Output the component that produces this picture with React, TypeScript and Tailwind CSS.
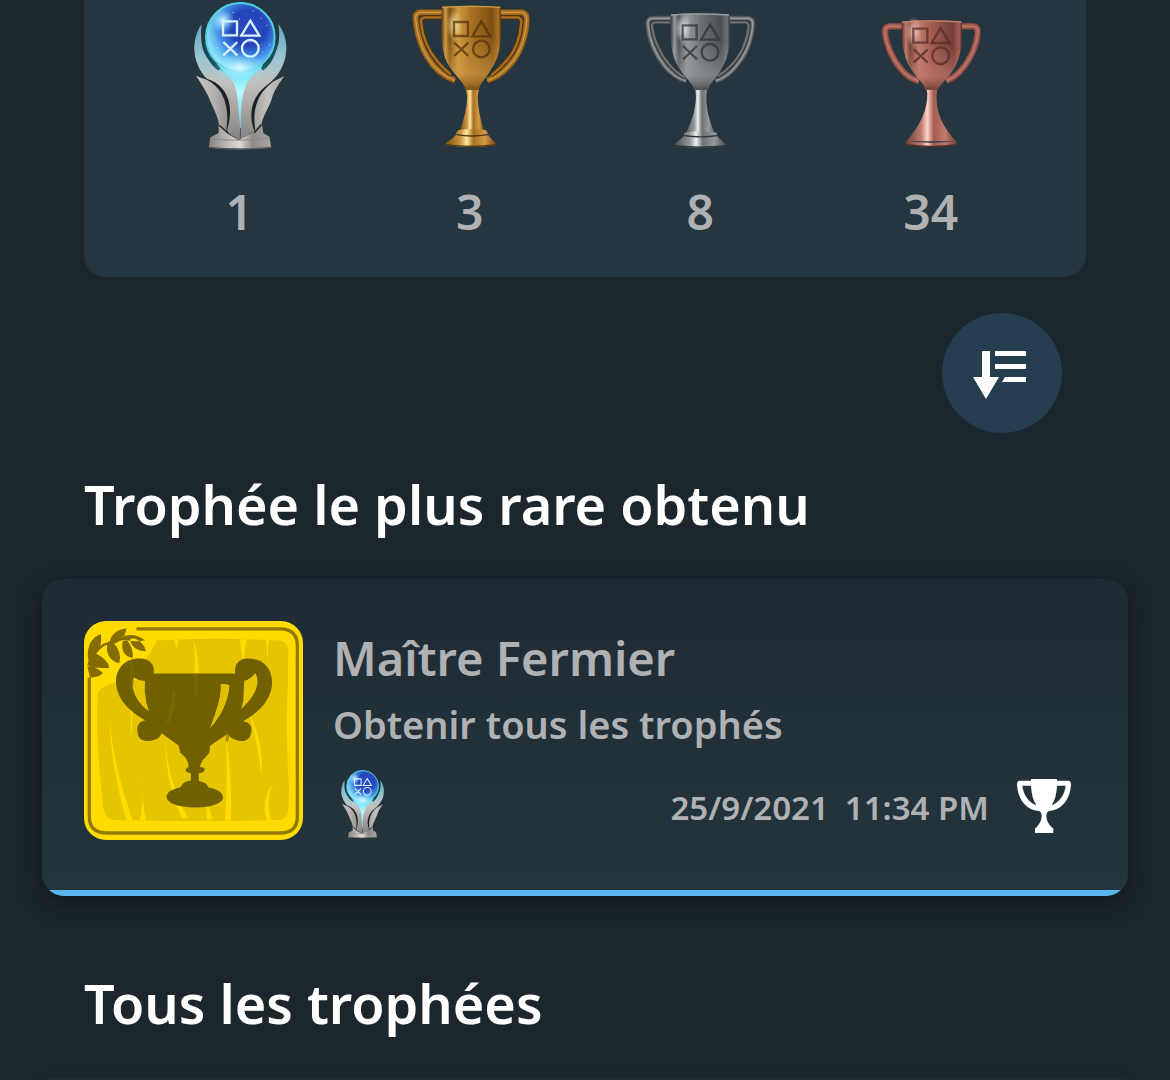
import { useId } from "react";

const metals = {
  gold: {
    label: "Or",
    width: 140,
    viewBox: "0 0 420 480",
    cup: "M125 20 Q213 14 302 20 C306 100 306 160 275 205 C256 240 240 248 236 270 L198 270 C192 246 170 232 152 205 C122 165 122 100 125 20 Z",
    rim: "M126 22Q213 16 301 22",
    handles: [
      "M130 37 L60 37 Q45 40 47 58 C52 110 72 162 100 196 Q128 228 165 241",
      "M298 37 L366 37 Q380 40 380 58 C378 110 360 162 328 196 Q298 230 262 241",
    ],
    grooves: [
      "M130 52 L74 52 Q61 54 63 68 C68 112 86 154 112 184 Q130 206 152 224",
      "M300 52 L354 52 Q365 54 364 68 C361 112 346 154 318 184 Q300 206 274 226",
    ],
    neck: "M198 264 L236 264 L236 274 C229 290 238 350 252 392 L180 392 C196 350 207 290 198 274 Z",
    foot: "M176 390 Q213 384 256 390 Q264 394 264 404 C272 416 278 420 286 428 L287 436 Q213 446 138 436 L138 428 C150 420 160 414 168 404 Q168 394 176 390 Z",
    bands: "M170 404Q213 412 264 404M139 434Q213 444 287 434",
    marks: "translate(160 62)",
    edge: "#54330d",
    dark: "#7c5013",
    mid: "#a97022",
    light: "#cf9a44",
    shine: "#ffeaa6",
    handleWidth: 16,
  },
  silver: {
    label: "Argent",
    width: 130,
    viewBox: "0 0 390 480",
    cup: "M107 43 Q195 37 283 43 C288 110 286 166 260 206 C241 240 222 250 218 270 L180 270 C174 249 151 234 133 206 C106 166 104 110 107 43 Z",
    rim: "M108 45Q195 39 282 45",
    handles: [
      "M110 55 L51 55 Q37 57 39 74 C43 120 64 167 91 200 Q116 230 153 243",
      "M280 55 L340 55 Q355 57 353 74 C350 120 330 167 302 200 Q279 229 242 243",
    ],
    grooves: [
      "M110 67 L63 67 Q49 68 51 80 C56 120 77 164 102 193 Q124 219 150 233",
      "M282 67 L331 67 Q342 69 341 80 C338 120 319 164 291 193 Q272 215 249 229",
    ],
    neck: "M181 266 L216 266 L215 278 C211 310 220 360 241 402 L151 402 C174 360 186 310 182 278 Z",
    foot: "M148 398 Q196 390 245 398 L247 408 C254 418 262 422 271 431 L270 439 Q194 446 121 439 L120 431 C131 422 140 417 147 408 Z",
    bands: "M148 407Q196 414 247 407M121 437Q195 446 270 437",
    marks: "translate(141 72)",
    edge: "#303436",
    dark: "#4b4f51",
    mid: "#6e7273",
    light: "#969a9c",
    shine: "#eef2f3",
    handleWidth: 12,
  },
  bronze: {
    label: "Bronze",
    width: 120,
    viewBox: "0 0 360 480",
    cup: "M92 64 Q182 58 272 64 C276 118 273 168 248 207 C230 239 206 251 201 269 L164 269 C160 250 140 238 120 207 C94 168 91 118 92 64 Z",
    rim: "M93 66Q182 60 271 66",
    handles: [
      "M98 79 L56 79 Q41 80 42 97 C45 133 65 178 90 207 Q110 234 144 243",
      "M268 79 L307 79 Q321 80 320 97 C318 133 299 178 273 207 Q254 232 226 242",
    ],
    grooves: [],
    neck: "M166 265 L199 265 L197 280 C194 325 207 374 256 424 L106 424 C151 374 170 325 169 280 Z",
    foot: "M106 422 Q180 434 256 422 L256 434 Q182 445 105 434 Z",
    bands: "M106 434Q182 445 255 434",
    marks: "translate(125 82)",
    edge: "#572c27",
    dark: "#723f38",
    mid: "#a25b50",
    light: "#bf7b6c",
    shine: "#ffd5c9",
    handleWidth: 17,
  },
};

// square, triangle, cross, circle
const Marks = () => (
  <>
    <path d="M2 4H44V46H2ZM84 2L111 47H57ZM3 66L45 106M45 66L3 106" />
    <circle cx="84" cy="85" r="25" />
  </>
);

const CupTrophy = ({ metal }: { metal: keyof typeof metals }) => {
  const id = useId();
  const m = metals[metal];

  return (
    <svg
      width={m.width}
      height="160"
      viewBox={m.viewBox}
      fill="none"
      role="img"
      aria-label={m.label}
    >
      <defs>
        <linearGradient id={`${id}-body`}>
          <stop offset="0" stopColor={m.edge} />
          <stop offset=".07" stopColor={m.light} />
          <stop offset=".14" stopColor={m.dark} />
          <stop offset=".28" stopColor={m.light} />
          <stop offset=".5" stopColor={m.mid} />
          <stop offset=".85" stopColor={m.dark} />
          <stop offset=".95" stopColor={m.mid} />
          <stop offset="1" stopColor={m.edge} />
        </linearGradient>
        <linearGradient id={`${id}-low`} x2="0" y2="1">
          <stop offset=".35" stopColor={m.light} stopOpacity="0" />
          <stop offset=".8" stopColor={m.light} stopOpacity=".6" />
          <stop offset="1" stopColor={m.dark} />
        </linearGradient>
        <linearGradient id={`${id}-stem`}>
          <stop offset="0" stopColor={m.dark} />
          <stop offset=".3" stopColor={m.light} />
          <stop offset=".42" stopColor={m.shine} />
          <stop offset=".55" stopColor={m.mid} />
          <stop offset=".78" stopColor={m.light} />
          <stop offset="1" stopColor={m.dark} />
        </linearGradient>
        <radialGradient id={`${id}-glow`}>
          <stop offset="0" stopColor={m.shine} stopOpacity=".9" />
          <stop offset="1" stopColor={m.shine} stopOpacity="0" />
        </radialGradient>
      </defs>
      {m.handles.map((d) => (
        <g key={d}>
          <path d={d} stroke={m.dark} strokeWidth={m.handleWidth + 3} />
          <path d={d} stroke={m.mid} strokeWidth={m.handleWidth - 2} />
          <path d={d} stroke={m.light} strokeWidth="4" />
        </g>
      ))}
      {m.grooves.map((d) => (
        <g key={d}>
          <path d={d} stroke={m.edge} strokeWidth="13" />
          <path d={d} stroke={m.mid} strokeWidth="7" />
        </g>
      ))}
      <path d={m.neck} fill={`url(#${id}-stem)`} />
      <path d={m.foot} fill={`url(#${id}-stem)`} />
      <path d={m.bands} stroke={m.edge} strokeWidth="4" />
      <path d={m.cup} fill={`url(#${id}-body)`} />
      <path d={m.cup} fill={`url(#${id}-low)`} />
      <path d={m.rim} stroke={m.light} strokeWidth="4" />
      <g transform={m.marks}>
        <ellipse cx="3" cy="14" rx="24" ry="46" fill={`url(#${id}-glow)`} />
        <g stroke={m.edge} strokeOpacity=".75" strokeWidth="7">
          <Marks />
        </g>
      </g>
    </svg>
  );
};

const PlatinumTrophy = ({ width, height }: { width: number; height: number }) => {
  const id = useId();

  return (
    <svg
      width={width}
      height={height}
      viewBox="0 0 360 480"
      fill="none"
      role="img"
      aria-label="Platine"
    >
      <defs>
        <radialGradient id={`${id}-orb`} cx=".62" cy=".36" r=".72">
          <stop offset="0" stopColor="#2a49c4" />
          <stop offset=".36" stopColor="#2444b8" />
          <stop offset=".6" stopColor="#3f8ce8" />
          <stop offset=".8" stopColor="#74d0f5" />
          <stop offset="1" stopColor="#b4f6ff" />
        </radialGradient>
        <linearGradient id={`${id}-wing`} x2="0" y2="1">
          <stop offset="0" stopColor="#5fa9bf" />
          <stop offset=".3" stopColor="#9cc6d2" />
          <stop offset=".5" stopColor="#c3c1bf" />
          <stop offset="1" stopColor="#85817f" />
        </linearGradient>
        <linearGradient id={`${id}-left`}>
          <stop offset="0" stopColor="#c9c6c4" />
          <stop offset=".6" stopColor="#b3afad" />
          <stop offset="1" stopColor="#94908e" />
        </linearGradient>
        <linearGradient id={`${id}-right`}>
          <stop offset="0" stopColor="#a5a19f" />
          <stop offset=".5" stopColor="#c4c1bf" />
          <stop offset="1" stopColor="#aaa6a4" />
        </linearGradient>
        <linearGradient id={`${id}-base`}>
          <stop offset="0" stopColor="#86827f" />
          <stop offset=".35" stopColor="#c7c4c2" />
          <stop offset=".5" stopColor="#dddad8" />
          <stop offset=".7" stopColor="#8f8b89" />
          <stop offset="1" stopColor="#a8a5a3" />
        </linearGradient>
        <linearGradient id={`${id}-beam`} x2="0" y2="1">
          <stop offset="0" stopColor="#4bd8f2" />
          <stop offset=".45" stopColor="#b9fbff" />
          <stop offset="1" stopColor="#5ccbe8" />
        </linearGradient>
        <radialGradient id={`${id}-glow`}>
          <stop offset="0" stopColor="#d5faff" />
          <stop offset="1" stopColor="#85e2ff" stopOpacity="0" />
        </radialGradient>
      </defs>
      <path d="M112 190Q182 222 254 190L215 265L192 385H174L165 262Z" fill={`url(#${id}-beam)`} />
      <path
        d="M68 72C64 110 66 146 84 172C104 204 142 214 162 246C180 280 176 330 184 378L182 422L122 380C132 340 126 300 104 260C86 236 66 226 52 184C40 144 46 104 68 72Z"
        fill={`url(#${id}-wing)`}
      />
      <path
        d="M298 72C304 110 300 146 280 172C258 204 222 214 204 250C188 284 184 330 186 378L184 422L246 378C232 340 240 300 262 260C284 236 302 226 316 184C328 144 322 104 298 72Z"
        fill={`url(#${id}-wing)`}
      />
      <path
        d="M51 227Q70 236 88 240C126 256 150 296 146 348L140 396L120 375C118 352 106 332 96 308C86 280 68 252 51 227Z"
        fill={`url(#${id}-left)`}
      />
      <path
        d="M316 228Q296 238 280 246C244 268 222 304 222 348L228 396L247 375C252 348 268 326 278 298C284 272 300 252 316 228Z"
        fill={`url(#${id}-right)`}
      />
      {/* gaps between the leaves */}
      <path
        d="M76 235C128 246 156 290 153 342C152 364 147 384 141 398C146 366 146 344 142 322C134 276 112 254 76 235ZM290 240C240 264 216 304 217 348C217 368 222 386 230 398C227 376 224 352 228 330C236 290 254 264 290 240Z"
        fill="#1b2023"
      />
      <path
        d="M119 374L148 402L181 420L215 401L249 374L253 399L271 410L277 443Q182 452 89 443L94 412L119 399Z"
        fill={`url(#${id}-base)`}
      />
      <path d="M121 376L148 400M247 374L226 398" stroke="#2b2f31" strokeWidth="5" />
      <path d="M148 402L181 420" stroke="#5f5c5a" strokeWidth="3" />
      <path d="M94 416Q182 426 271 414" stroke="#8d8986" strokeWidth="3" />
      <path d="M90 442Q182 452 277 442" stroke="#55575a" strokeWidth="4" />
      <path d="M79 126Q82 180 121 208M290 126Q286 180 249 208" stroke="#14505c" strokeWidth="10" />
      <circle cx="184" cy="112" r="103" fill={`url(#${id}-orb)`} stroke="#55cfdb" strokeWidth="6" />
      <ellipse cx="182" cy="203" rx="80" ry="46" fill={`url(#${id}-glow)`} />
      <circle cx="132" cy="62" r="36" fill={`url(#${id}-glow)`} />
      <path
        d="M105 120h3M114 143h3M105 167h3M245 55h3M262 76h3M249 156h3M270 135h3M160 38h3M221 33h3M180 57h3"
        stroke="#b9dcff"
        strokeWidth="3"
      />
      <g transform="translate(130 60)" stroke="#d9efff" strokeWidth="7">
        <Marks />
      </g>
    </svg>
  );
};

const FarmTrophy = () => (
  <svg
    viewBox="0 0 660 660"
    fill="none"
    role="img"
    aria-label="Maître Fermier"
    className="size-[219px] shrink-0 rounded-[22px]"
  >
    <path d="M0 0H660V660H0Z" fill="#ffdb00" />
    <path
      d="M220 59Q400 48 590 59Q618 62 616 100C610 220 625 350 616 560Q620 599 580 600Q330 606 85 600Q57 590 56 545C43 410 35 330 42 220Q53 181 150 182Z"
      fill="#e5c400"
    />
    <path
      d="M328 52Q350 110 345 222L328 222Q340 110 328 52ZM471 55L490 54Q477 110 490 170Q474 115 471 55ZM550 56L559 56Q549 91 559 125Q546 91 550 56ZM272 56L285 54L279 86ZM77 280Q85 430 147 601L128 601Q77 430 77 280ZM139 200Q153 280 140 360Q142 280 139 200ZM246 365Q252 480 313 594H294Q244 480 246 365ZM426 340Q446 440 443 601H425Q434 440 426 340ZM176 450Q175 550 187 601H168Q180 550 176 450ZM370 515Q375 570 389 598H370Q368 550 370 515ZM494 270Q544 365 534 465Q522 350 494 270ZM572 485Q546 540 565 601H551Q530 540 572 485ZM619 130Q604 300 618 500Z"
      fill="#ffdb00"
    />
    <path
      d="M158 24H590Q643 24 643 75V590Q643 639 590 639H70Q16 639 16 590V170"
      stroke="#937900"
      strokeWidth="10"
    />
    {/* laurel */}
    <path
      d="M51 40C20 48 6 84 14 120L10 132Q24 144 76 141Q74 118 36 98Q56 80 51 40ZM10 136Q38 136 57 157Q42 172 18 170ZM128 22C98 26 76 44 78 70Q122 66 128 22ZM72 64C62 94 78 122 106 127Q116 96 88 64ZM116 47Q150 34 184 58Q150 66 116 54ZM117 60C110 90 124 108 147 111Q150 84 130 58ZM138 54C144 80 160 90 187 91Q180 64 152 52Z"
      fill="#846c00"
    />
    <path d="M22 116Q40 76 80 64Q100 54 140 52" stroke="#846c00" strokeWidth="7" />
    {/* cup */}
    <path
      fillRule="evenodd"
      d="M209 158C217 131 194 112 168 113C119 112 92 150 97 192C101 237 139 274 185 299C165 303 157 317 162 338C163 359 188 367 212 358Q230 352 234 338L285 375L290 397C310 412 315 425 315 440Q299 447 311 456L322 459V481Q298 483 291 501C263 507 247 518 249 532C252 550 285 561 330 562C381 564 417 550 419 533C418 514 398 506 375 502Q371 486 346 482V459Q370 454 361 442L350 440Q352 420 366 411L378 396L380 376L433 340Q440 353 458 359C481 367 499 358 502 342C510 319 501 306 479 302C522 279 566 239 567 186C566 136 535 113 493 113C467 113 451 132 456 158ZM151 170Q168 182 184 180L183 211L188 247L196 272C160 250 134 196 151 170ZM483 180Q500 178 516 157Q530 181 516 212Q502 240 474 265L480 240ZM412 191Q429 189 438 194C434 244 411 291 380 322C399 275 416 222 412 191Z"
      fill="#716000"
    />
    <path
      d="M412 191Q429 189 438 194C434 244 411 291 380 322C399 275 416 222 412 191Z"
      fill="#dfbf00"
    />
    <path
      d="M139 118Q154 155 141 205M335 158Q342 190 336 224M270 210Q276 250 251 308M426 330Q438 350 428 362"
      stroke="#806e00"
      strokeWidth="9"
      strokeOpacity=".6"
    />
  </svg>
);

const counts = [
  { icon: <PlatinumTrophy width={120} height={160} />, count: 1 },
  { icon: <CupTrophy metal="gold" />, count: 3 },
  { icon: <CupTrophy metal="silver" />, count: 8 },
  { icon: <CupTrophy metal="bronze" />, count: 34 },
];

const App = () => {
  return (
    <main className="flex min-h-screen flex-col bg-[#1b262d] px-[42px] font-['Noto_Sans',sans-serif] font-semibold text-[#b0b1b3]">
      {/* Trophy counts */}
      <ul className="mx-[42px] grid grid-cols-4 rounded-b-[22px] bg-[#253641] px-10 pb-[34px]">
        {counts.map(({ icon, count }) => (
          <li key={count} className="flex flex-col items-center gap-5">
            {icon}
            <span className="text-5xl leading-[63px]">{count}</span>
          </li>
        ))}
      </ul>

      {/* Sort */}
      <button
        type="button"
        aria-label="Trier"
        className="mt-9 mr-[66px] flex size-[120px] items-center justify-center self-end rounded-full bg-[#243e4f]"
      >
        <svg width="120" height="120" viewBox="0 0 120 120" fill="#fff">
          <path d="M40 38H48V64H57L44 86L31 64H40ZM53 38H84V43H53ZM53 51H84V56H53ZM63 64H84V69H60Z" />
        </svg>
      </button>

      <h2 className="mt-[35px] px-[42px] text-[54px] leading-[72px] text-white">
        Trophée le plus rare obtenu
      </h2>

      <article className="mt-[39px] overflow-hidden rounded-[22px] bg-linear-to-b from-[#1f2b35] to-[#24353e] shadow-[0_8px_24px_rgba(0,0,0,0.4)]">
        <div className="flex gap-[30px] px-[42px] pt-[42px] pb-[47px]">
          <FarmTrophy />
          <div className="flex min-w-0 flex-1 flex-col">
            <h3 className="mt-1 text-[47px] leading-[66px]">Maître Fermier</h3>
            <p className="text-[38px] leading-[66px]">Obtenir tous les trophés</p>
            <div className="mt-3 flex items-center">
              <PlatinumTrophy width={58} height={74} />
              <time
                dateTime="2021-09-25T23:34"
                className="ml-auto flex gap-4 pt-1 text-[33px] leading-[48px]"
              >
                <span>25/9/2021</span>
                <span>11:34 PM</span>
              </time>
              <svg width="54" height="54" viewBox="0 0 162 162" className="mr-[15px] ml-7" fill="#fff">
                <path
                  fillRule="evenodd"
                  d="M42 0H120V5H154Q162 6 162 15C160 61 135 93 95 96Q88 100 88 110C88 125 96 137 109 149V162H54V149C66 137 74 125 74 110Q74 100 67 96C27 93 2 61 0 15Q0 6 8 5H42ZM42 20H16C19 47 35 70 58 79Q43 55 42 20ZM120 20Q119 55 104 79C127 70 143 47 146 20Z"
                />
              </svg>
            </div>
          </div>
        </div>
        <div className="h-1.5 bg-[#5ab5ec]" />
      </article>

      <h2 className="mt-[71px] px-[42px] text-[54px] leading-[72px] text-white">
        Tous les trophées
      </h2>

      <div className="mt-10 flex-1 rounded-t-[22px] bg-[#1f2b35] shadow-[0_8px_24px_rgba(0,0,0,0.4)]" />
    </main>
  );
};

export default App;
